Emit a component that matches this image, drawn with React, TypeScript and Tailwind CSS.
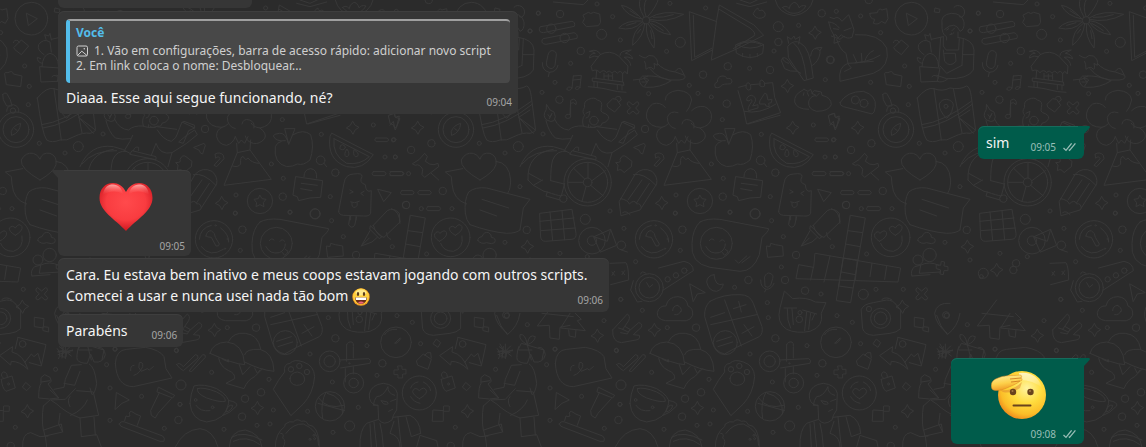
import type { ReactNode } from "react";

type Dot = [number, number, number];

const SPARKLE = "M0-19Q4-5 19-1Q5 4 1 20Q-3 5-19 1Q-5-4 0-19Z";
const CROSS = "M-17-10Q-20-17-12-19L0-9L12-19Q19-18 17-10L8 0L18 11Q17 19 10 18L0 9L-11 18Q-19 16-17 9L-8 0Z";

// Each board is one part of the repeating wallpaper, drawn at three times its size
const boards: { x: number; y: number; paths: string[]; dots: Dot[]; sparkles: [number, number][]; crosses: [number, number][] }[] = [
  {
    x: 520,
    y: 0,
    paths: [
      // sliders
      "M62 80L156 64Q167 66 163 79L70 98Q55 97 58 86ZM70 116L162 98Q175 102 171 115L78 133Q63 132 66 121Z",
      // puzzle piece
      "M190 45L205 37Q212 44 221 37L239 42L242 67L235 77L199 80L188 67L193 57Z",
      // flower
      "M372 51Q350 15 362-6M378 49Q366 20 380-4M383 50Q410 20 416-6M366 57Q330 18 304 16Q320 48 366 57M364 63Q318 60 296 84Q340 95 366 66M370 70Q335 95 338 136Q370 110 374 72M380 72Q374 110 402 144Q410 100 384 71M387 66Q410 100 452 104Q430 66 388 62M388 58Q440 70 491 43Q430 28 387 54M400 52Q430 54 460 44M395 70Q415 80 430 92M330 32L352 46M320 76L348 68M392 92L396 116M352 100L362 88",
      // books and bowl
      "M588 64L508 35L515 182L577 150M520 46L524 172L575 145M590 60L598 15L702 75L731 106L650 147L575 180ZM598 28L690 84Q710 100 702 108L640 146M648 134Q690 110 731 134L728 160Q690 186 650 160ZM650 134Q690 155 731 134M656 132Q690 120 722 132M668 160V170M690 163V174M712 160V170",
      "M700 40Q708 24 714 24Q714 36 726 30Q740 38 734 50Q715 62 702 46ZM650 10L690 20L740 6M660 0L690 10L720-4M100 6L190 14L206-2",
      // lotus
      "M766 0Q775 40 822 47Q870 40 880-2M788 22Q802 40 822 40Q845 40 858 18Q842 14 838 24Q830 4 820 8Q808 14 808 26Q798 14 788 22Z",
      // microphone
      "M84 165Q88 150 98 152Q110 154 109 165L105 196Q98 210 88 204Q78 200 79 190ZM67 188Q66 212 88 217Q110 216 114 196M88 217L85 230",
      // hut
      "M214 198L240 164Q270 148 296 168L324 198L322 222Q314 208 308 222Q302 208 292 220Q284 208 276 220Q268 208 260 218Q250 206 240 218Q230 206 218 212ZM230 212L228 234M308 222V246M218 234L310 246L312 256L218 244ZM222 244V260M306 256V270M232 246V262M292 256V268M252 220L252 236M265 222V238M278 222V238M252 228H278M205 260Q250 264 270 270T318 277M242 164Q232 144 208 154Q220 154 226 160Q210 160 208 174Q222 164 236 170M300 166Q298 152 334 150Q322 156 316 160Q334 162 338 176Q322 168 312 172Q332 182 332 196",
      // note pair
      "M160 228L184 226L180 262M160 228L156 264M159 240L182 238M156 264Q144 256 140 268Q150 276 156 264M180 262Q168 256 166 266Q172 274 180 262",
      // peppers
      "M358 166Q366 172 376 174Q386 162 400 168Q416 178 412 196L402 190Q406 208 400 208Q392 196 378 208Q378 190 374 184M412 190Q430 212 466 216L494 226Q500 238 478 240Q420 246 390 206M466 214Q476 200 484 208L492 224M340 240L358 238Q366 224 380 228Q410 226 454 242Q420 264 380 262Q360 262 358 238M362 238Q380 232 386 240Q384 248 366 246M384 228L370 234L382 246L374 258",
      // small cloud
      "M586 262Q580 250 592 246Q592 230 606 228Q620 228 620 236Q636 232 636 246Q634 254 622 252Q604 252 602 260Q594 266 586 262Z",
      // cactus
      "M806 130L802 110L814 118L822 108L826 118L840 110L836 132M804 138Q824 116 842 130Q870 140 880 234L852 242Q830 210 806 174ZM822 130Q850 150 860 238M806 190Q790 186 788 174Q800 168 816 198Q830 216 842 220M872 168Q876 142 890 146Q902 148 900 160Q896 184 878 196M788 174L784 182L794 206Q810 216 830 214M900 152L906 142L888 144",
      // calendar
      "M656 262L678 256M694 254L720 252M736 250L758 248L764 292L782 338L680 372L672 334L654 272M672 334Q720 344 768 312M780 346L684 372M678 262Q676 250 684 248Q694 250 692 268Q684 274 680 266ZM720 252Q718 240 726 240Q736 244 734 258Q726 264 720 258Z",
      "M680 300Q680 288 694 286Q710 290 706 304L698 318L714 314V324L686 332Q680 326 696 304Q696 294 688 302ZM720 302L734 280L740 282L744 300L756 298L754 308L746 310L748 320L738 318L736 312L720 312Z",
      // dumplings
      "M852 268L846 272Q822 284 824 306Q830 328 866 328M852 268L864 274L872 268L878 282M884 272L904 276L906 286Q934 292 934 314Q926 334 890 334Q864 328 866 306Q868 290 888 286L876 280ZM852 278L850 286M898 280L888 290M862 278L866 288",
      // bolt and fish tail
      "M926 346L944 340L946 352L960 356L946 390L940 374L932 372ZM926 66Q944 66 958 84M926 66Q930 90 944 110L942 130L960 124",
      // man in wheelchair
      "M80 314L90 330L102 336Q110 352 102 362Q94 368 80 360Q66 348 78 330ZM84 344L90 352L96 340L88 356M78 362Q86 396 106 414Q124 420 152 416M104 358Q118 388 146 390Q160 376 190 378M134 450L150 424L158 406M190 378Q184 358 194 346Q184 334 194 322Q190 304 206 298Q224 290 232 300Q250 304 244 322Q240 336 248 338Q268 344 266 356Q260 368 246 370Q244 382 232 378Q220 388 210 378M190 378Q206 386 230 380L290 388M232 390Q250 420 274 424Q290 414 292 402Q300 380 306 366L344 384L326 392L310 430L296 426L320 406L344 390L352 404L320 430L276 458Q240 466 228 430L214 466M198 340L210 334L206 350L198 354M206 374V382M276 458L264 500M306 368L312 364L344 376L344 384M150 462L156 452L228 470V478ZM176 452V442Q164 438 160 452",
      "M0 500Q30 430 100 440Q130 446 150 460M6 492Q40 450 110 452M24 540Q20 460 100 448M24 540L40 556L68 540M92 542Q92 500 98 480Q110 450 140 454M40 556L72 574L82 576L78 588L120 600M82 576Q110 586 124 588L134 550M92 542L132 552M26 520L66 542",
      // wheel spokes
      "M204 534V487M216 542L256 512M212 556L250 588M198 560L186 604M190 547H144M194 537L160 504",
      // note, perfume, comb
      "M152 302L150 344Q138 340 136 350Q140 360 152 352L152 310Q160 304 168 314Q172 302 162 298ZM262 312L278 296L290 298L302 316L284 336L264 322ZM286 294Q290 286 300 290L304 300L296 306M406 462Q420 454 430 466L432 476L410 500L402 496L420 476Q416 466 408 474ZM342 442L372 430L376 436L368 462Q360 462 358 452Z",
      // volcano
      "M436 300Q436 276 474 271Q512 274 515 300Q510 324 500 334M515 332Q530 316 554 320Q578 330 574 356Q570 378 540 384Q520 382 514 370M540 384Q562 400 554 416Q538 434 520 430Q500 426 496 408M436 322Q420 304 398 312Q376 328 380 354Q388 382 426 382Q436 380 444 372M426 382Q408 390 410 410Q416 434 440 436Q460 430 466 410M474 338Q450 330 442 352Q442 380 466 386M486 372Q490 354 508 360Q526 366 522 384M466 410L476 430L484 420L494 430L504 410M470 430L472 458L510 450L512 420M472 458L432 556L574 538L510 450M458 498Q474 504 482 492Q480 468 490 470Q496 484 504 474Q516 490 538 490",
      // apple
      "M626 432Q616 396 598 400Q580 402 580 408Q588 426 616 422M626 432L614 386L644 386ZM640 404Q670 386 692 404Q704 440 690 480Q670 498 652 492Q640 500 620 500Q580 490 586 440Q590 428 604 424",
      // watermelon
      "M756 400L880 464Q850 512 800 500Q740 480 750 410ZM762 416L868 470Q840 496 800 490Q756 466 762 416M780 442Q780 434 788 434Q798 438 796 444Q788 454 780 446ZM800 448Q790 464 798 470Q810 470 806 456ZM822 450Q818 464 826 470Q838 470 834 460Z",
      // pencil
      "M298 604L346 522Q368 500 396 514Q414 530 410 552L360 630L304 647ZM340 524Q370 516 408 556M302 596Q324 600 328 612Q344 596 350 612Q362 608 364 624M366 540L324 600M388 550L350 608M308 638Q318 630 330 644",
      // chat box, puzzle
      "M648 530L728 542L722 592L690 594L656 602L652 590L640 586ZM672 530Q672 508 692 506Q712 508 710 534M664 550L712 556M662 566L696 572M288 488Q306 488 300 478Q308 462 318 470L336 484L334 500L312 518Q304 504 292 512L294 496Z",
      // popsicle
      "M776 634L792 550Q796 522 822 522Q848 518 846 530Q836 548 856 554Q858 580 874 572L872 640Q868 650 850 648L790 646Q776 644 776 634ZM812 648V660M828 650V660M810 570L820 576L810 580M852 574L842 580L850 586M812 606Q824 612 838 604M816 608Q814 624 826 622Q834 618 832 608",
      // dashes and cursor
      "M888 414H922Q930 420 922 425H888Q880 420 888 414ZM880 515H914Q922 521 914 527H880Q872 521 880 515ZM934 515H968Q976 521 968 527H934Q924 521 934 515ZM894 568L934 578L912 604Z",
      // star badge
      "M540 586L546 596L558 598L550 608L552 620L540 614L528 620L530 608L522 598L534 596ZM732 490L740 500",
      // chocolate bar
      "M60 640L156 628L168 700Q170 716 156 718L76 724Q64 724 62 712ZM90 636L98 722M126 632L134 720M60 664L162 654M64 692L166 684",
    ],
    dots: [
      [55, 40, 6], [120, 42, 11], [30, 93, 6], [231, 12, 6], [278, 50, 6], [94, 86, 14], [134, 114, 14], [245, 103, 15],
      [301, 120, 6], [182, 153, 11], [152, 190, 6], [440, 154, 6], [481, 127, 15], [557, 24, 6], [450, 10, 6], [378, 61, 11],
      [775, 80, 15], [836, 76, 6], [905, 40, 11], [775, 126, 11], [762, 153, 6], [623, 199, 11], [689, 205, 6], [750, 210, 11],
      [549, 224, 11], [508, 256, 6], [534, 280, 6], [574, 291, 6], [620, 311, 11], [607, 359, 6], [724, 403, 6], [916, 239, 6],
      [932, 180, 11], [880, 375, 6], [940, 420, 6], [105, 247, 6], [66, 277, 6], [118, 299, 11], [386, 281, 6], [375, 387, 11],
      [69, 402, 6], [222, 362, 13], [574, 492, 6], [610, 535, 6], [722, 481, 13], [766, 518, 11], [608, 590, 11], [915, 471, 6],
      [946, 471, 6], [751, 590, 6], [706, 642, 15], [630, 636, 6], [468, 585, 6], [466, 639, 6], [270, 633, 6], [196, 658, 15],
      [540, 603, 38], [203, 547, 71], [203, 547, 60], [203, 547, 13], [130, 596, 11], [216, 722, 40], [216, 722, 14],
      [20, 690, 11], [120, 760, 6], [30, 780, 6], [168, 790, 11], [70, 820, 15],
    ],
    sparkles: [[885, 98], [802, 258], [818, 383], [425, 609], [22, 740]],
    crosses: [[339, 324]],
  },
  {
    x: 830,
    y: 0,
    paths: [
      // fox
      "M0 52L12 56Q24 46 36 64L56 44Q66 70 72 90L66 112Q50 118 42 108L30 118L4 108M10 86L26 88M42 92L64 84M10 106L18 104L24 114L34 104L42 112M76 104Q150 100 170 144Q182 200 130 220Q90 230 30 244Q24 200 54 190Q110 190 150 166M20 118Q30 150 48 160L54 190M70 164L80 186M94 160L96 186M104 186Q110 160 130 152M54 192L64 204L44 214M76 188L130 184",
      // puzzle, play
      "M120 40L142 38Q146 22 156 30L170 26L174 56L166 70L154 64Q146 76 130 70L134 58Q118 56 120 40ZM230 40L262 56L236 76ZM316 24L330 28L328 38L314 36Z",
      // woman with a cactus
      "M336 72Q330 44 364 40Q396 40 402 66Q404 90 390 94Q376 60 344 88M336 72Q334 104 350 110L350 120M384 114L384 96M372 22Q380 12 396 20Q412 36 396 52L388 50M350 90L356 86M366 92L374 84M360 104Q368 104 372 98M304 118L340 110M384 112Q430 118 432 150L430 210Q414 238 350 236L320 226M340 110V138L348 150H386L388 116M340 150L344 184Q360 204 378 184L376 160H342M332 112L326 200M400 116L396 196M396 196L350 220L330 198M400 164H432M270 200L330 204L322 244L274 246ZM276 200Q278 164 300 160Q324 164 326 200M282 164Q260 150 266 134Q280 114 300 126L304 156M288 118L284 104L296 108L300 100L304 120M276 190Q260 186 262 172L272 176M322 244Q336 250 352 238M306 230Q314 220 326 234",
      // bag, camera bag
      "M192 142L214 120L236 138L214 164L196 150ZM190 128Q192 118 204 122L208 128M164 224Q160 216 174 218Q188 210 190 222L216 228L212 260L170 254Z",
      // dome and eggs
      "M30 308Q50 274 100 274Q140 286 136 320Q134 340 126 342Q80 330 40 320Q28 316 30 308ZM158 284Q162 276 170 280Q184 300 186 318L170 318Q156 298 158 284Z",
      // compass
      "M170 334Q170 316 190 314Q210 320 206 336M184 394Q190 376 212 370Q210 398 186 406ZM194 386L202 392",
      // map
      "M262 294Q290 260 312 266Q336 276 360 264Q390 270 410 258Q420 260 424 290L436 384Q440 396 420 400Q400 396 372 410Q350 424 330 420Q306 430 290 420Q276 400 262 294ZM312 266L334 420M370 266L396 398M276 374Q340 366 424 304M280 384Q350 374 428 312M348 354Q326 330 328 312Q334 298 350 298Q370 302 370 316Q368 336 356 350ZM386 352L436 390M420 330L386 352L430 400",
      "M0 344L12 340L16 352L28 348L20 380L14 384L10 364L0 376",
      // pin
      "M88 478L104 460L112 470L106 484Q120 496 132 494L144 490L146 500L104 532L96 524L98 508Q88 490 76 496L68 492ZM124 520L146 540",
      // heart bubbles
      "M270 540Q210 506 214 480Q226 456 250 460Q264 464 270 478Q276 456 300 460Q322 468 318 494Q312 516 270 540ZM218 506L166 516L184 530L186 552Q190 600 230 612M318 484Q358 488 362 540Q362 566 354 578M226 640Q222 600 236 576Q256 560 290 564L420 598L400 624L390 690M276 598L356 624M270 630L320 648M240 674Q228 660 226 640M240 674Q300 696 350 700Q380 700 390 690",
      // dashes
      "M36 572H68Q76 578 68 584H36Q26 578 36 572ZM88 572H120Q128 578 120 584H88Q78 578 88 572ZM114 620H148Q156 626 148 632H114Q104 626 114 620ZM0 515H36Q44 521 36 527H0",
    ],
    dots: [
      [19, 34, 6], [92, 48, 6], [152, 98, 6], [244, 56, 49], [116, 0, 11], [420, 93, 6], [445, 39, 6], [224, 198, 6],
      [122, 247, 6], [238, 259, 6], [235, 314, 6], [76, 300, 12], [102, 310, 12], [189, 332, 8], [198, 389, 53], [198, 389, 39],
      [348, 319, 6], [268, 430, 6], [124, 430, 11], [63, 450, 11], [12, 419, 6], [16, 471, 6], [345, 459, 6], [385, 440, 15],
      [390, 560, 6], [158, 573, 11], [48, 615, 11], [94, 626, 6], [186, 626, 6], [56, 521, 6], [0, 179, 11], [364, 100, 1],
    ],
    sparkles: [[83, 383]],
    crosses: [],
  },
  {
    x: 610,
    y: 200,
    paths: [
      // clock with a hand
      "M108 108Q110 92 124 92Q136 100 136 112L148 132Q148 140 138 138L124 112Q112 112 108 108ZM88 118Q90 84 124 76M152 84Q178 104 176 126M160 148Q120 174 94 140",
      // smiley bubble
      "M270 66Q290 54 330 58L476 86Q476 94 456 112L448 164Q430 214 390 214L300 202Q240 190 246 130Q248 86 270 66ZM298 122Q304 112 312 120M330 124Q336 114 344 124M288 140Q300 164 328 158Q346 150 346 132M334 154L344 166Q352 162 354 154L346 148M376 180L386 190L410 168M396 188L420 170",
      // popsicle stick, small bag
      "M540 48L536 74Q544 88 554 76L560 50M470 138L480 140L482 130L496 134L518 138L520 168L474 172ZM34 150L52 156",
      // fountain pen
      "M610 76L652 32Q670 20 688 40L690 66L642 112Q620 108 610 76ZM602 78L636 110L628 116L600 88ZM600 92L574 138L606 126L622 112M574 138L598 114M664 26Q690 34 690 70M650 98Q650 114 662 118",
      // crossword
      "M722 46L766 54L722 308L680 302ZM616 160L872 204L864 246L558 236L566 194L610 202ZM714 92L758 98M706 132L750 140M700 174L742 180M694 216L736 224M686 258L728 264M660 168L642 246M610 202L602 240M786 190L780 230M830 198L824 238M700 174L686 258M742 180L736 240",
      // love face
      "M808 124Q790 112 794 102Q802 90 810 100Q824 86 830 98Q832 112 808 124ZM856 106Q836 94 838 84Q848 74 856 84Q868 66 876 80Q880 92 856 106ZM812 130Q820 154 850 154Q882 144 876 108",
      // cloud and people
      "M924 122Q922 112 936 110Q942 94 956 98Q966 104 964 112Q980 114 974 128Q966 134 950 128Q934 134 924 122ZM906 228Q900 212 914 200L930 196Q960 182 986 196M932 196L928 220L992 216M906 228L960 224M980 194L992 196L994 184L1004 186L1002 198L1014 200L1014 212L1002 212L1000 224L990 222L992 210L980 206Z",
      // watch
      "M146 204L222 184Q250 190 250 212L160 270M70 242L62 270L82 306L96 304M92 222Q94 210 108 220M110 248L118 262L128 254",
      // moon, cursor, mic
      "M312 224Q292 226 290 246Q296 274 320 274Q338 268 340 252Q316 262 312 224ZM240 252L286 278L262 282L250 304ZM464 230Q470 216 480 220Q492 224 488 236L482 256Q474 266 466 260ZM452 240Q452 264 470 268Q484 268 492 250M468 268L464 276",
      // cloud backup
      "M166 362Q140 358 142 338Q148 316 168 318Q174 290 204 290Q230 292 234 318Q250 324 248 346Q242 360 230 362ZM188 332Q188 318 202 316M212 334Q208 346 194 344M202 316Q216 322 214 334",
      // keypad
      "M300 304Q340 282 390 284Q420 284 430 310L456 380Q460 400 448 410L380 442L344 462Q314 456 306 424L284 350Q282 320 300 304ZM344 300L394 438M302 374L440 344M302 352L344 338M386 304L394 336M370 326L408 314M402 374L426 408M396 400L432 380M320 424L364 410M324 440L368 426",
      // cat
      "M524 274L548 296Q590 290 616 306L648 308L634 340Q642 380 600 394Q560 402 530 388Q498 368 510 324ZM522 324L560 324M578 330L620 342M532 326L534 360L542 384M546 326L550 374M590 336L584 392M602 340L596 388M614 342L606 360",
      // rock hand
      "M8 390L52 342Q62 348 56 362L38 388L54 396L86 368Q98 370 94 382L70 404L88 406Q92 418 78 420L34 428Q6 426 8 390ZM26 384L38 388M46 380L60 388L52 402L32 398",
      // camera
      "M754 328Q760 312 790 308L830 300Q850 300 860 316L872 330L872 386Q860 398 840 400L790 406Q762 404 758 386ZM816 298Q830 288 846 300",
      // squares
      "M914 352L942 356L940 384L914 380ZM940 380L956 382L956 396L940 392ZM800 418L812 428L804 442L790 432ZM888 548L902 560L890 572L878 562ZM790 630L820 632L820 664L788 664ZM822 618L838 618V634H822Z",
      // pin, picture, asterisk
      "M1020 310Q980 306 974 340Q978 374 1012 400M864 412L948 434L934 498L898 488M864 412L856 446M884 488L904 462L912 470L924 460L934 494M810 466L848 440L846 456Q880 464 894 508Q870 484 844 484L842 494ZM990 432L998 446M984 454L1000 452L996 470L1008 472L1010 456L1020 458",
      // stopwatch
      "M676 428L690 414M674 430Q680 434 692 416M644 404Q654 386 680 388",
      // mushrooms
      "M120 460Q128 428 170 426Q220 430 224 494Q190 492 120 460ZM176 424Q190 396 226 400Q264 404 272 446M224 464Q228 446 270 448Q310 458 312 514Q270 510 224 486M146 474Q150 500 176 512Q196 520 194 536L168 550L222 566Q232 540 254 530L278 506M158 478L176 486L174 478M208 494L218 524L240 500M254 504L262 520L270 510",
      // ticks
      "M20 494Q26 484 40 500L76 464Q86 464 84 474L40 512Q28 506 20 494ZM58 512L98 464Q108 462 106 472L66 514Z",
      // paw bookmark
      "M362 646L310 568Q324 540 344 516Q340 492 360 490Q372 476 400 486Q432 496 434 530Q430 580 400 612ZM360 536Q362 518 382 516Q404 520 404 540Q400 556 380 556Q360 554 360 536Z",
      // scissors
      "M530 434Q534 424 546 426Q552 430 550 440V474M530 434V484M510 480L596 476Q606 480 600 490L512 504M526 506V546M550 500L550 522",
      // bag, plus
      "M740 482L760 462L784 478L774 508L744 496ZM764 466Q770 454 782 458L784 474M684 498H696V508H708V522H698V534H684V524H672V510H684Z",
      // heart coin, padlock
      "M748 596Q728 584 728 574Q734 558 748 572Q764 556 770 574Q768 586 748 596ZM722 564Q728 548 744 546M760 546Q780 556 782 572M722 590Q730 606 750 610M814 538L846 528L856 564L828 574Q816 564 814 538ZM820 534Q808 524 820 516Q832 516 832 530",
      // cup
      "M60 610Q62 580 72 558Q100 550 140 566Q180 590 176 610Q168 660 110 666Q64 660 60 610ZM82 566Q78 580 110 594Q150 608 166 604Q168 590 140 576Q100 560 82 566M178 602Q204 606 200 618Q180 640 160 646M168 632Q176 612 188 616Q186 632 168 636ZM78 616Q90 636 120 632",
      // basketball
      "M446 594Q470 630 522 616M468 576Q450 610 458 656M444 610L524 632M472 580Q520 590 518 642",
      // man in glasses
      "M620 616Q596 612 598 582Q604 554 640 550Q676 554 682 580L680 630Q668 646 666 660Q640 680 626 658L624 616ZM624 616L610 616Q612 600 620 590Q640 590 654 560Q652 580 674 586M634 602L652 606Q660 616 642 612ZM662 604L678 598M656 634L668 628M570 741Q568 690 590 670L626 658M670 652L720 646Q750 660 752 700M612 666L620 741M684 650L694 741M600 672L604 741M708 650L724 710L752 700M630 670L636 700L640 741M672 664L660 700L670 704Q690 714 690 741M740 741L750 706L800 722L804 741",
      // burger
      "M316 741Q316 700 344 680L346 672Q360 662 370 666Q380 654 394 664Q410 660 414 674Q432 676 438 690Q448 710 448 741M332 700Q344 700 338 714Q350 722 340 741M348 700Q370 670 400 672Q446 690 446 736",
      "M16 741Q40 690 90 686Q130 690 144 741M178 741Q180 692 226 690Q270 700 276 741M184 712Q220 690 276 720M190 724Q230 704 270 734",
      // satchel beside the sweets
      "M1020 620Q1010 600 1020 590",
    ],
    dots: [
      [42, 85, 6], [196, 40, 6], [217, 89, 11], [211, 151, 6], [77, 185, 6], [34, 136, 13], [132, 118, 56], [137, 76, 2], [173, 117, 2], [165, 146, 2],
      [319, 130, 48], [360, 37, 6], [435, 41, 15], [485, 62, 6], [520, 110, 6], [558, 165, 11], [514, 201, 6], [415, 240, 11],
      [374, 262, 6], [525, 240, 11], [585, 272, 11], [633, 282, 6], [667, 140, 6], [770, 162, 6], [708, 15, 11], [842, 112, 58],
      [760, 283, 15], [798, 268, 6], [880, 268, 6], [1005, 127, 6], [924, 180, 15], [959, 165, 20], [118, 263, 42], [118, 263, 31],
      [173, 238, 8], [198, 226, 8], [223, 212, 8], [97, 331, 6], [32, 298, 6], [172, 383, 6], [258, 383, 11], [472, 308, 6],
      [475, 353, 6], [496, 415, 11], [420, 462, 6], [346, 428, 36], [568, 358, 10], [570, 338, 6], [681, 347, 6], [727, 367, 6],
      [812, 355, 30], [812, 355, 19], [777, 327, 8], [678, 427, 46], [752, 431, 6], [878, 432, 10], [591, 437, 6], [637, 490, 11],
      [621, 526, 6], [479, 484, 31], [479, 484, 17], [551, 549, 30], [551, 549, 14], [487, 546, 6], [538, 490, 2], [297, 538, 6],
      [125, 517, 6], [19, 451, 6], [33, 555, 15], [30, 613, 6], [25, 660, 11], [128, 622, 4], [77, 600, 4], [225, 596, 11],
      [273, 577, 11], [310, 630, 6], [216, 650, 11], [261, 676, 6], [162, 688, 6], [300, 672, 6], [413, 634, 6], [480, 619, 44],
      [565, 622, 6], [539, 678, 15], [489, 697, 6], [748, 579, 51], [836, 552, 3], [977, 508, 6], [856, 682, 6], [842, 738, 11],
      [363, 508, 8], [388, 498, 8], [411, 516, 8], [1008, 345, 10], [432, 706, 3], [420, 718, 3], [434, 716, 3],
    ],
    sparkles: [[133, 390], [262, 624], [877, 320], [892, 634]],
    crosses: [[935, 282]],
  },
  {
    x: 440,
    y: 300,
    paths: [
      // courier
      "M172 146Q184 160 176 176M190 140L186 174M174 164L218 150M236 140Q228 170 232 180Q240 190 262 190L272 162L282 186Q310 190 316 164Q312 140 296 142M238 150H276M244 194L214 196L196 238L192 262L162 268M192 250L224 256L240 214M268 192Q284 200 290 250Q286 280 276 284L270 264M230 272L280 276L296 346L240 354Q200 340 170 312L152 300L196 298L226 266M262 300Q250 330 212 346M240 354L244 410M282 352L286 406M244 410L290 404L304 441M180 340L176 372L188 396M132 390L184 372L188 396L136 408ZM130 318Q124 360 130 390M130 318L150 300",
      // his bottle and boot
      "M124 232L134 224L150 232L154 244L144 252L176 294Q150 300 116 294Q116 260 122 252ZM124 246L150 242M176 294L150 270M136 408L140 441M68 441Q66 400 92 398L120 410L144 408",
      // bell bubble
      "M346 190Q348 150 380 148L436 142Q480 150 492 170L498 206L516 234L400 260Q350 260 346 190ZM392 212Q390 196 402 196M402 226Q420 220 428 200Q430 184 418 188Q412 204 424 214L442 206L448 210L460 200",
      // cursor, toothpaste, toothbrush
      "M350 278L388 300L366 310L346 328ZM476 262L524 286L518 294L472 276ZM478 278L452 332L454 346L466 354L474 340L514 296M358 372Q362 362 374 366L488 408Q496 414 492 424L480 424L370 382Q360 380 358 372ZM374 362L378 348Q384 352 390 348Q384 336 394 334Q408 344 422 348L412 376",
    ],
    dots: [[345, 147, 6], [330, 264, 6], [320, 194, 6], [425, 289, 6], [330, 361, 6], [493, 385, 6], [530, 152, 6], [540, 313, 6]],
    sparkles: [],
    crosses: [],
  },
  {
    x: 780,
    y: 250,
    paths: [
      // pine trees and gift
      "M650 150L592 228L628 226L630 264L658 268L660 232L690 226M606 190L700 200M690 190L662 234L736 242L712 212L724 208L706 190M686 240L688 258L706 262L708 240M534 300L544 280L612 300L606 330M562 284Q536 270 540 254Q556 250 562 284Q566 250 586 260Q584 276 562 284L574 330M470 196Q480 230 502 254Q534 230 540 190",
      "M478 290L514 318M512 288L480 320M474 306L518 302M496 282L496 326",
      // password box
      "M810 40L858 38Q866 50 866 90L812 104M816 66L824 76M824 64L816 76M846 64L854 74M854 62L846 74",
      // envelope
      "M762-40L812-62L830-14L782 6ZM762-40L802-26L812-62",
    ],
    dots: [[501, 197, 8], [562, 224, 6], [645, 298, 6], [792, 212, 6], [843, 148, 6], [829, 301, 6], [742, 20, 6], [700, 60, 11], [604, 80, 6]],
    sparkles: [[772, 257], [650, 60]],
    crosses: [],
  },
];

function Wallpaper() {
  return (
    <svg className="absolute inset-0 h-full w-full" aria-hidden="true" fill="none" stroke="#383838" strokeWidth="3" strokeLinejoin="round" strokeLinecap="round">
      <defs>
        <g id="doodles">
          {boards.map((board, i) => (
            <g key={i} transform={`translate(${board.x} ${board.y}) scale(0.3333)`}>
              <path d={board.paths.join("")} />
              {board.dots.map(([x, y, r], j) => <circle key={j} cx={x} cy={y} r={r} />)}
              {board.sparkles.map(([x, y], j) => <path key={j} d={SPARKLE} transform={`translate(${x} ${y})`} />)}
              {board.crosses.map(([x, y], j) => <path key={j} d={CROSS} transform={`translate(${x} ${y})`} />)}
            </g>
          ))}
        </g>
      </defs>
      {[-1320, -880, -440, 0, 440, 880, 1320].map((x) => <use key={x} href="#doodles" x={x} />)}
    </svg>
  );
}

function Ticks() {
  return (
    <svg className="h-3 w-[13px]" viewBox="0 0 13 12" fill="none" stroke="currentColor" strokeWidth="1.3" role="img" aria-label="Entregue">
      <path d="M0.5 7L3 9.4L8.6 2.4M5.8 8.6L6.6 9.4L12.4 2.4" />
    </svg>
  );
}

function Heart() {
  return (
    <svg className="h-[50px] w-[54px]" viewBox="0 0 54 50" role="img" aria-label="❤️">
      <defs>
        <radialGradient id="heart" cx="0.5" cy="0.4" r="0.62">
          <stop offset="0" stopColor="#ff4a4c" />
          <stop offset="0.6" stopColor="#f93c40" />
          <stop offset="1" stopColor="#c9141d" />
        </radialGradient>
        <linearGradient id="shine" x1="0" y1="0" x2="0" y2="1">
          <stop offset="0" stopColor="#ffd0cc" stopOpacity="0.75" />
          <stop offset="1" stopColor="#ff5a58" stopOpacity="0" />
        </linearGradient>
      </defs>
      <path fill="url(#heart)" d="M27 10C24 4 19 1 14 1C6 1 0.5 7 0.5 16C0.5 29 16 37 27 49C38 37 53.5 29 53.5 16C53.5 7 48 1 40 1C35 1 30 4 27 10Z" />
      <path fill="url(#shine)" d="M4 13C5 5 9 2.5 14 2.5C19 2.5 23 6 24 12C18 8 9 9 4 13ZM50 13C49 5 45 2.5 40 2.5C35 2.5 31 6 30 12C36 8 45 9 50 13Z" />
    </svg>
  );
}

function Salute() {
  return (
    <svg className="h-[50px] w-[56px]" viewBox="0 0 56 50" role="img" aria-label="🫡">
      <defs>
        <radialGradient id="face" cx="0.6" cy="0.36" r="0.68">
          <stop offset="0" stopColor="#fff3a0" />
          <stop offset="0.45" stopColor="#ffdd3f" />
          <stop offset="0.8" stopColor="#fbbd28" />
          <stop offset="1" stopColor="#ee8a1c" />
        </radialGradient>
        <linearGradient id="hand" x1="0" y1="0" x2="0.3" y2="1">
          <stop offset="0" stopColor="#fff0a0" />
          <stop offset="0.6" stopColor="#fdd04a" />
          <stop offset="1" stopColor="#f09a25" />
        </linearGradient>
        <linearGradient id="glow" x1="0" y1="0" x2="0" y2="1">
          <stop offset="0" stopColor="#fff" stopOpacity="0.7" />
          <stop offset="1" stopColor="#fff" stopOpacity="0" />
        </linearGradient>
      </defs>
      <circle cx="31" cy="25" r="24" fill="url(#face)" />
      <path fill="url(#glow)" d="M28 3Q46 1 51 18Q42 10 29 10Z" />
      <path fill="#df8b32" opacity="0.55" d="M9 20Q20 22 31 12L29 18Q20 24 12 22Z" />
      <path fill="url(#hand)" stroke="#d98524" strokeWidth="0.5" d="M1 19C-1 14 1 10 7 8C13 5 20 6 29 5C31 5 31 7 30 8C32 9 31 11 29 11C27 13 23 15 18 17C12 20 4 22 1 19Z" />
      <path fill="none" stroke="#cf7d22" strokeWidth="0.9" d="M19 9L30 8M20 12L29 11" />
      <circle cx="22" cy="22" r="3.2" fill="#69431c" />
      <circle cx="39.5" cy="22" r="3.2" fill="#69431c" />
      <circle cx="21.5" cy="21" r="1" fill="#a47a45" />
      <circle cx="39" cy="21" r="1" fill="#a47a45" />
      <path d="M22.5 35.5H39.5" stroke="#69431c" strokeWidth="2" strokeLinecap="round" fill="none" />
    </svg>
  );
}

function Grin() {
  return (
    <svg className="ml-1 inline-block size-[18px] align-middle" viewBox="0 0 18 18" role="img" aria-label="😃">
      <circle cx="9" cy="9" r="8.7" fill="#f59a22" />
      <circle cx="9" cy="8.6" r="8" fill="#ffcf3d" />
      <ellipse cx="9" cy="4.5" rx="5.5" ry="3" fill="#ffe98a" />
      <ellipse cx="6" cy="6" rx="1.2" ry="1.9" fill="#5c3b1a" />
      <ellipse cx="12" cy="6" rx="1.2" ry="1.9" fill="#5c3b1a" />
      <path fill="#6b2d1a" d="M3 9.500H15Q14.500 16 9 16Q3.500 16 3 9.500Z" />
      <path fill="#fff" d="M3.500 9.500H14.500L14 12H4Z" />
      <path fill="#f0627a" d="M6 14.600Q9 12.400 12 14.600Q9 17 6 14.600Z" />
    </svg>
  );
}

function Picture() {
  return (
    <svg className="mr-[6px] inline-block size-3 align-[-2px]" viewBox="0 0 12 12" fill="none" stroke="currentColor" role="img" aria-label="Foto">
      <rect x="1" y="1" width="10.500" height="10" rx="1.500" />
      <path d="M1.500 10.500L5.800 6.200L11 10.500" />
      <circle cx="8.300" cy="3.800" r="0.800" fill="currentColor" stroke="none" />
    </svg>
  );
}

function Time({ value, sent }: { value: string; sent?: boolean }) {
  return (
    <span className={`flex shrink-0 items-center gap-[7px] text-[10px] leading-3 ${sent ? "pr-0.5 text-[#99beb7]" : "text-[#a5a5a5]"}`}>
      <time>{value}</time>
      {sent && <Ticks />}
    </span>
  );
}

function Bubble({ sent, tail, className, children }: { sent?: boolean; tail?: boolean; className?: string; children: ReactNode }) {
  return (
    <div
      className={`relative max-w-full rounded-md pr-1.5 pl-2 ${sent ? "self-end bg-[#005c4b] shadow-[inset_0_1px_#176b5c]" : "bg-[#363636] shadow-[inset_0_1px_#3e3e3e]"} ${className ?? ""}`}
    >
      {tail && (
        <svg
          className={`absolute top-0 h-2 w-3 ${sent ? "-right-1.5 text-[#005c4b]" : "-left-1.5 text-[#363636]"}`}
          viewBox="0 0 12 8"
          fill="currentColor"
          aria-hidden="true"
        >
          {sent ? <path d="M0 0H11Q12.500 0.500 11.500 2L6 8H0Z" /> : <path d="M12 0H1Q-0.500 0.500 0.500 2L6 8H12Z" />}
        </svg>
      )}
      {children}
    </div>
  );
}

export default function App() {
  return (
    <div className="relative min-h-screen overflow-hidden bg-[#2b2b2b] font-['Noto_Sans','Open_Sans',sans-serif] text-sm leading-[21px] text-[#f5f5f5]">
      <Wallpaper />
      <main className="relative flex flex-col items-start pr-[62px] pl-[58px]">
        <div className="h-2 w-[194px] rounded-b-md bg-[#363636]" />

        <Bubble className="mt-[3px] pt-2 pb-1.5">
          <blockquote className="mr-0.5 mb-1 h-16 w-[444px] max-w-full rounded-[4px] border-t-2 border-l-4 border-t-[#a0a0a0] border-l-[#53bdeb] bg-[#484848] pt-1 pl-1.5 text-xs leading-[15px] text-[#cfcfcf]">
            <p className="mb-[3px] font-bold text-[#53bdeb]">Você</p>
            <p className="whitespace-nowrap">
              <Picture />
              1. Vão em configurações, barra de acesso rápido: adicionar novo script
            </p>
            <p>2. Em link coloca o nome: Desbloquear...</p>
          </blockquote>
          <div className="flex items-end justify-between">
            <p>Diaaa. Esse aqui segue funcionando, né?</p>
            <Time value="09:04" />
          </div>
        </Bubble>

        <Bubble sent tail className="mt-3 flex items-end gap-[21px] py-1.5">
          <p>sim</p>
          <Time value="09:05" sent />
        </Bubble>

        <Bubble tail className="mt-[11px] flex h-[86px] w-[133px] flex-col items-end justify-between pt-3 pb-1">
          <div className="flex w-full justify-center">
            <Heart />
          </div>
          <Time value="09:05" />
        </Bubble>

        <Bubble className="mt-0.5 w-[551px] py-1.5">
          <p>Cara. Eu estava bem inativo e meus coops estavam jogando com outros scripts.</p>
          <div className="flex items-end justify-between">
            <p>
              Comecei a usar e nunca usei nada tão bom
              <Grin />
            </p>
            <Time value="09:06" />
          </div>
        </Bubble>

        <Bubble className="mt-0.5 flex items-end gap-6 py-1.5">
          <p>Parabéns</p>
          <Time value="09:06" />
        </Bubble>

        <Bubble sent tail className="mt-[11px] flex h-[86px] w-[133px] flex-col items-end justify-between pt-3 pb-1">
          <div className="flex w-full justify-center">
            <Salute />
          </div>
          <Time value="09:08" sent />
        </Bubble>
      </main>
    </div>
  );
}
